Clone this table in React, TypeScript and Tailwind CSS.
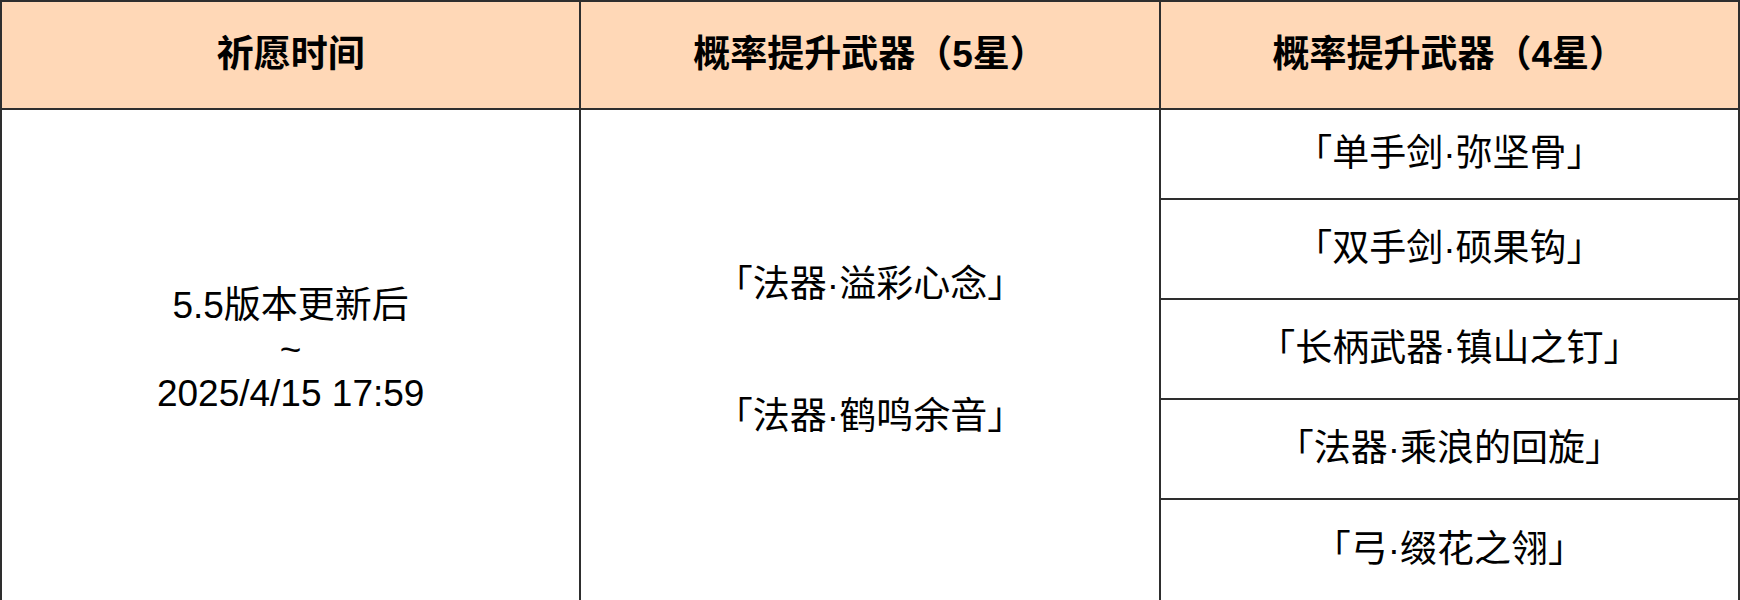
const fourStar = [
  '「单手剑·弥坚骨」',
  '「双手剑·硕果钩」',
  '「长柄武器·镇山之钉」',
  '「法器·乘浪的回旋」',
  '「弓·缀花之翎」',
];

const font = { fontFamily: '"Liberation Sans", "Noto Sans CJK SC", sans-serif' };

const rowHeight = ['h-[90px]', 'h-[100px]', 'h-[100px]', 'h-[100px]', 'h-[102px]'];

export default function App() {
  return (
    <div className="w-[1740px] h-[600px] bg-white" style={font}>
      <table className="w-full h-full border-collapse table-fixed text-black">
        <thead>
          <tr className="h-[108px] bg-[#ffd8b7]">
            <th className="border-2 border-[#2e2e2e] text-[37px] font-bold">祈愿时间</th>
            <th className="border-2 border-[#2e2e2e] text-[37px] font-bold">概率提升武器（5星）</th>
            <th className="border-2 border-[#2e2e2e] text-[37px] font-bold">概率提升武器（4星）</th>
          </tr>
        </thead>
        <tbody className="text-[37px] leading-[44px]">
          {fourStar.map((name, i) => (
            <tr key={name} className={rowHeight[i]}>
              {i === 0 && (
                <>
                  <td rowSpan={5} className="border-2 border-[#2e2e2e] text-center align-middle pb-[10px]">
                    <div>5.5版本更新后</div>
                    <div>~</div>
                    <div>2025/4/15 17:59</div>
                  </td>
                  <td rowSpan={5} className="border-2 border-[#2e2e2e] text-center align-middle pb-[8px]">
                    <div className="flex flex-col items-center gap-[88px]">
                      <div>「法器·溢彩心念」</div>
                      <div>「法器·鹤鸣余音」</div>
                    </div>
                  </td>
                </>
              )}
              <td className="border-2 border-[#2e2e2e] text-center align-middle">{name}</td>
            </tr>
          ))}
        </tbody>
      </table>
    </div>
  );
}
